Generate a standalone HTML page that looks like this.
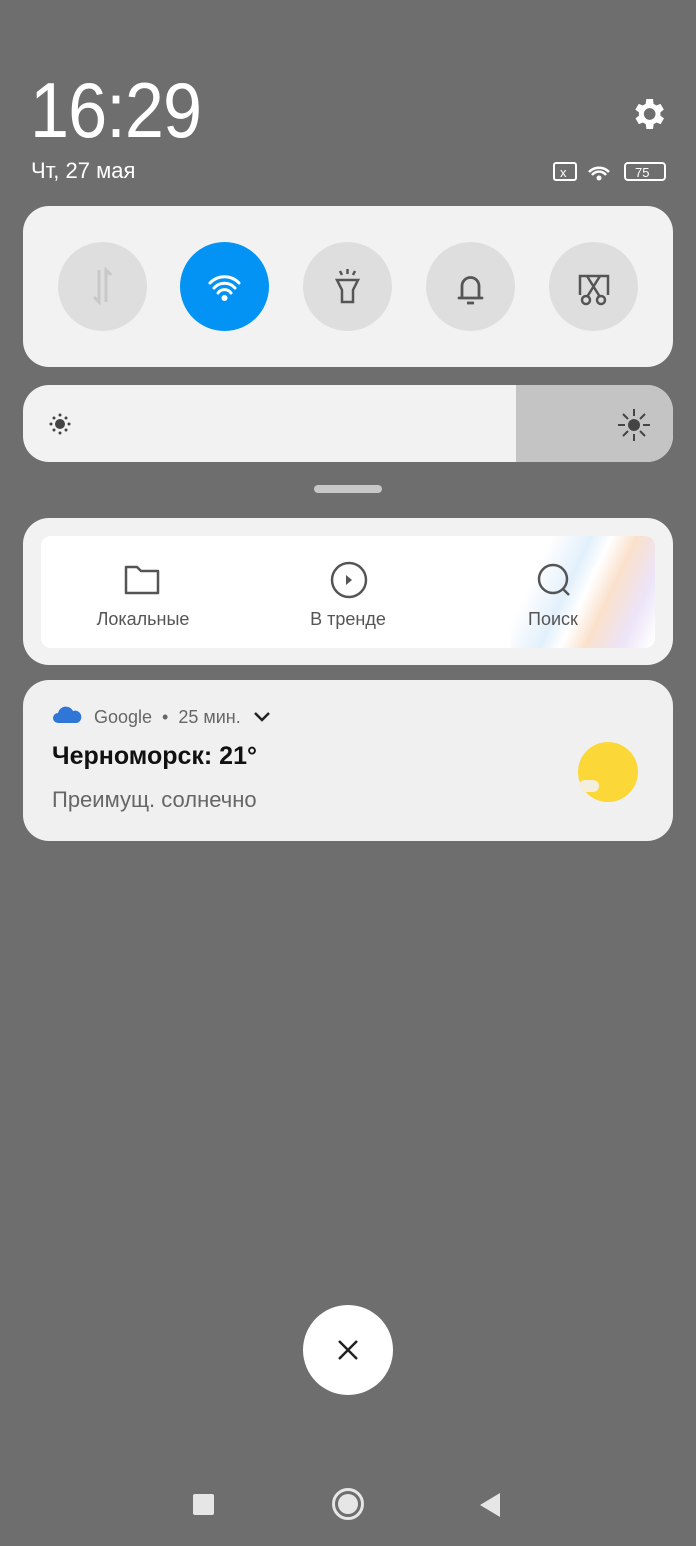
<!DOCTYPE html>
<html><head><meta charset="utf-8"><style>
body{margin:0;width:696px;height:1546px;background:#6e6e6e;position:relative;overflow:hidden;font-family:"Liberation Sans",sans-serif}
.a{position:absolute}
.card{position:absolute;left:23px;width:650px;background:#f2f2f2;border-radius:26px}
.btn{position:absolute;top:36px;width:89px;height:89px;border-radius:50%;background:#dedede}
</style></head><body>
<div class="a" style="left:30px;top:68px;font-size:78px;color:#fff;font-weight:300;letter-spacing:-1px;line-height:84px;transform:scaleX(.9);transform-origin:left">16:29</div>
<div class="a" style="left:31px;top:158px;font-size:22px;color:#fff">Чт, 27 мая</div>
<svg class="a" style="left:628px;top:94px" width="40" height="40" viewBox="0 0 24 24"><path fill="#fff" d="M19.4 13a7.5 7.5 0 000-2l2.1-1.6-2-3.5-2.5 1a7 7 0 00-1.7-1L15 3h-4l-.4 2.9a7 7 0 00-1.7 1l-2.5-1-2 3.5L6.6 11a7.5 7.5 0 000 2l-2.1 1.6 2 3.5 2.5-1a7 7 0 001.7 1L11 21h4l.4-2.9a7 7 0 001.7-1l2.5 1 2-3.5zM13 15.5a3.5 3.5 0 110-7 3.5 3.5 0 010 7z"/></svg>
<svg class="a" style="left:552px;top:160px" width="116" height="24"><rect x="2" y="3" width="22" height="17" rx="2" fill="none" stroke="#fff" stroke-width="2"/><text x="8" y="17" fill="#fff" font-size="13" font-family="Liberation Sans">x</text><path d="M37 12a14 14 0 0120 0M40 15a9 9 0 0114 0" stroke="#fff" stroke-width="2.5" fill="none"/><circle cx="47" cy="18" r="2.5" fill="#fff"/><rect x="73" y="3" width="40" height="17" rx="3" fill="none" stroke="#fff" stroke-width="2"/><text x="83" y="17" fill="#fff" font-size="13" font-family="Liberation Sans">75</text></svg>
<div class="card" style="top:206px;height:161px">
 <div class="btn" style="left:35px"><svg width="89" height="89"><path d="M41 28v32l-5-5M48 60V28l5 5" stroke="#c8c8c8" stroke-width="3" fill="none"/></svg></div>
 <div class="btn" style="left:157px;background:#0393f5"><svg width="89" height="89"><path d="M30 41a20 20 0 0129 0M34 46a14 14 0 0121 0M38 51a8 8 0 0113 0" stroke="#fff" stroke-width="3" fill="none" stroke-linecap="round"/><circle cx="44.5" cy="56" r="3" fill="#fff"/></svg></div>
 <div class="btn" style="left:280px"><svg width="89" height="89"><path d="M34 38h21l-5 10v12h-11V48z" stroke="#555" stroke-width="2.5" fill="none"/><path d="M44.5 27v5M37 29l2 4M52 29l-2 4" stroke="#555" stroke-width="2.5"/></svg></div>
 <div class="btn" style="left:403px"><svg width="89" height="89"><path d="M36 56V44a8.5 8.5 0 0117 0v12h3H33z" stroke="#555" stroke-width="2.8" fill="none" stroke-linejoin="round"/><path d="M41 61h7" stroke="#555" stroke-width="2.8"/></svg></div>
 <div class="btn" style="left:526px"><svg width="89" height="89"><path d="M31 53V34h28v19" stroke="#555" stroke-width="2.5" fill="none"/><path d="M38 34l13 21M51 34l-13 21" stroke="#555" stroke-width="2.5"/><circle cx="37" cy="58" r="4" stroke="#555" stroke-width="2.5" fill="#dedede"/><circle cx="52" cy="58" r="4" stroke="#555" stroke-width="2.5" fill="#dedede"/></svg></div>
</div>
<div class="card" style="top:385px;height:77px;overflow:hidden">
 <div class="a" style="left:493px;top:0;width:157px;height:77px;background:#c4c4c4"></div>
 <svg class="a" style="left:22px;top:26px" width="30" height="26"><circle cx="15" cy="13" r="5" fill="#444"/><g fill="#444"><circle cx="15" cy="4" r="1.5"/><circle cx="15" cy="22" r="1.5"/><circle cx="6" cy="13" r="1.5"/><circle cx="24" cy="13" r="1.5"/><circle cx="9" cy="7" r="1.5"/><circle cx="21" cy="7" r="1.5"/><circle cx="9" cy="19" r="1.5"/><circle cx="21" cy="19" r="1.5"/></g></svg>
 <svg class="a" style="left:592px;top:22px" width="38" height="36"><circle cx="19" cy="18" r="6" fill="#444"/><path d="M19 2v7M19 27v7M3 18h7M28 18h7M8 7l5 5M25 24l5 5M30 7l-5 5M13 24l-5 5" stroke="#444" stroke-width="2"/></svg>
</div>
<div class="a" style="left:314px;top:485px;width:68px;height:8px;border-radius:4px;background:#c8c8c8"></div>
<div class="card" style="top:518px;height:147px">
 <div class="a" style="left:18px;top:18px;width:614px;height:112px;background:#fff;border-radius:10px;overflow:hidden">
  <div class="a" style="left:470px;top:0;width:150px;height:112px;background:linear-gradient(115deg,rgba(255,255,255,0) 20%,#e2f0fb 40%,#fff 50%,#fbe1cc 62%,#ece4f8 80%,rgba(255,255,255,0) 95%)"></div>
  <svg class="a" style="left:82px;top:27px" width="40" height="34"><path d="M3 4h11l4 4h17v22H3z" stroke="#555" stroke-width="2.5" fill="none" stroke-linejoin="round"/></svg>
  <svg class="a" style="left:288px;top:25px" width="40" height="40"><circle cx="20" cy="19" r="17" stroke="#555" stroke-width="2.5" fill="none"/><path d="M17 14l6 5-6 5z" fill="#555"/></svg>
  <svg class="a" style="left:494px;top:25px" width="40" height="40"><circle cx="18" cy="18" r="14" stroke="#555" stroke-width="2.5" fill="none"/><path d="M28 28l6 6" stroke="#555" stroke-width="2.5"/></svg>
  <div class="a" style="left:0;top:73px;width:204px;text-align:center;font-size:18px;color:#555">Локальные</div>
  <div class="a" style="left:205px;top:73px;width:204px;text-align:center;font-size:18px;color:#555">В тренде</div>
  <div class="a" style="left:410px;top:73px;width:204px;text-align:center;font-size:18px;color:#555">Поиск</div>
 </div>
</div>
<div class="card" style="top:680px;height:161px;background:#f0f0f0">
 <svg class="a" style="left:30px;top:26px" width="30" height="18"><path d="M5 17a5 5 0 010-10 8 8 0 0115-2 6 6 0 014 12z" fill="#2f76d6"/></svg>
 <div class="a" style="left:71px;top:27px;font-size:18px;color:#666">Google &nbsp;•&nbsp; 25 мин.</div>
 <svg class="a" style="left:230px;top:31px" width="18" height="12"><path d="M2 2l7 7 7-7" stroke="#222" stroke-width="2.5" fill="none"/></svg>
 <div class="a" style="left:29px;top:62px;font-size:25px;font-weight:bold;color:#111">Черноморск: 21°</div>
 <div class="a" style="left:29px;top:107px;font-size:22px;color:#666">Преимущ. солнечно</div>
 <div class="a" style="left:555px;top:62px;width:60px;height:60px;border-radius:50%;background:#fbd838"></div>
 <div class="a" style="left:556px;top:100px;width:20px;height:12px;border-radius:8px;background:#f4eede"></div>
</div>
<div class="a" style="left:303px;top:1305px;width:90px;height:90px;border-radius:50%;background:#fff"><svg width="90" height="90"><path d="M36 36l18 18M54 36L36 54" stroke="#222" stroke-width="2.5"/></svg></div>
<div class="a" style="left:193px;top:1494px;width:21px;height:21px;background:#e6e6e6;border-radius:2px"></div>
<div class="a" style="left:332px;top:1488px;width:26px;height:26px;border-radius:50%;border:3px solid #e6e6e6"></div>
<div class="a" style="left:338px;top:1494px;width:20px;height:20px;border-radius:50%;background:#e6e6e6"></div>
<svg class="a" style="left:478px;top:1492px" width="24" height="26"><path d="M22 1v24L2 13z" fill="#e6e6e6"/></svg>
</body></html>
